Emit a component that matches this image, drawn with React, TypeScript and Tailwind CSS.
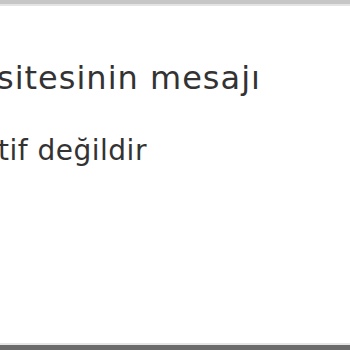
export default function App() {
  return (
    <div className="w-[350px] h-[350px] bg-white flex flex-col overflow-hidden">
      <div className="h-[4px] bg-[#c6c6c6] shrink-0" />
      <div className="h-[2px] bg-[#e4e4e4] shrink-0" />
      <div className="flex-1 flex flex-col text-[#333333] overflow-hidden" style={{ fontFamily: '"DejaVu Sans", sans-serif' }}>
        <div className="mt-[56px] ml-[-3px] text-[32px] leading-[32px] tracking-[1px] whitespace-nowrap">sitesinin mesajı</div>
        <div className="mt-[43px] ml-[-2px] text-[28px] leading-[28px] tracking-[0.5px] whitespace-nowrap">tif değildir</div>
      </div>
      <div className="h-[2px] bg-[#e6e6e6] shrink-0" />
      <div className="h-[5px] bg-[#6b6b6b] shrink-0" />
    </div>
  );
}
